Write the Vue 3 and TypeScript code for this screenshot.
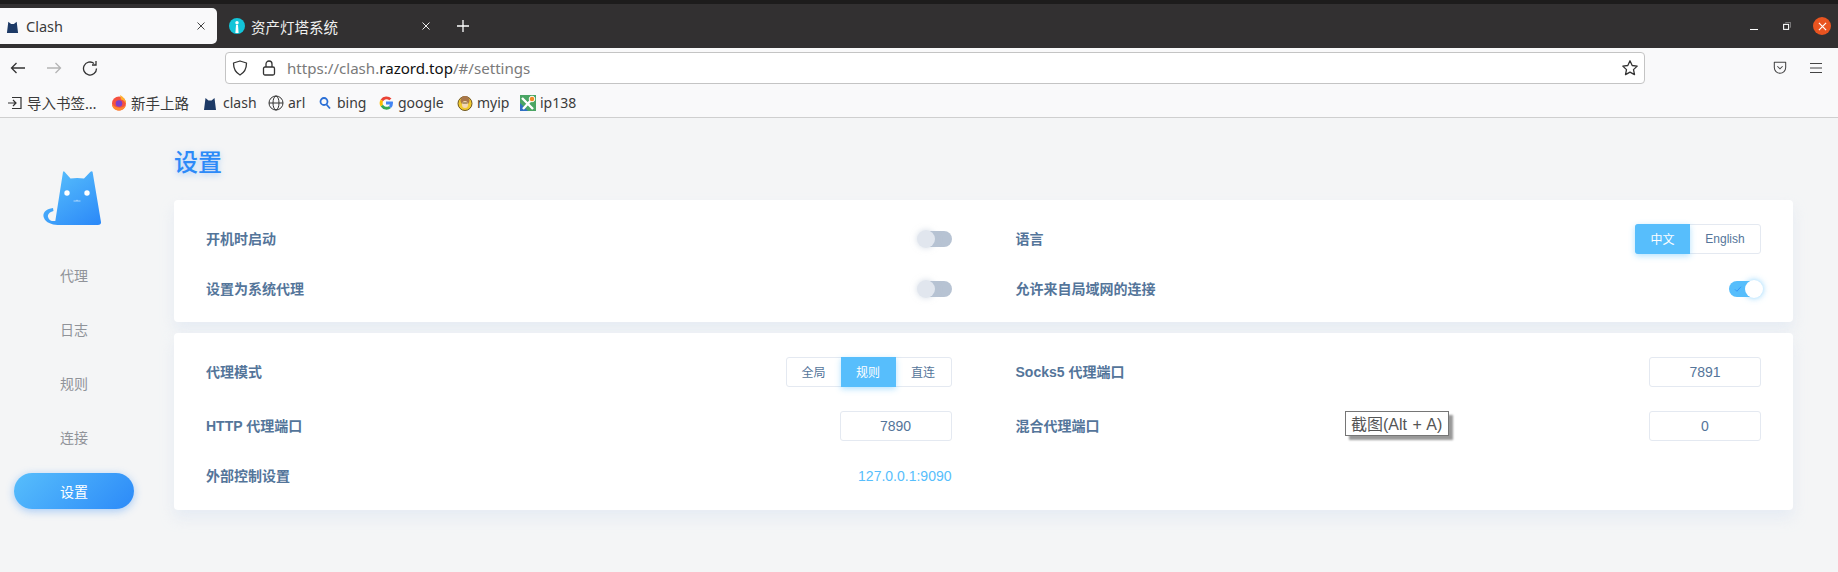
<template>
  <div class="page">
    <div class="top-strip"></div>
    <div class="tabbar">
      <div class="tab active">
        <svg class="fav small" viewBox="0 0 14 16"><path d="M1 15 2.500 3l3 2.400h3L11.500 3 13 15z" fill="#1d3a66" /></svg>
        <span class="tab-title">Clash</span>
        <svg class="tab-close" viewBox="0 0 8 8"><path d="M.5.5l7 7M7.500.5l-7 7" stroke="#444" stroke-width="1" /></svg>
      </div>
      <div class="tab">
        <svg class="fav" viewBox="0 0 16 16">
          <circle cx="8" cy="8" r="8" fill="#13c4d8" />
          <path d="M6.400 15 7 7h2l.6 8z" fill="#fff" />
          <circle cx="8" cy="4.800" r="1.700" fill="#fff" />
        </svg>
        <span class="tab-title">资产灯塔系统</span>
        <svg class="tab-close" viewBox="0 0 8 8"><path d="M.5.5l7 7M7.500.5l-7 7" stroke="#eee" stroke-width="1" /></svg>
      </div>
      <svg class="new-tab" viewBox="0 0 12 12"><path d="M6 0v12M0 6h12" stroke="#fff" stroke-width="1.300" /></svg>
      <div class="win-controls">
        <span class="win-min"></span>
        <svg class="win-max" viewBox="0 0 9 9">
          <path d="M3 1.500V.5h5.500V6H7.500" fill="none" stroke="#aaa" stroke-width=".7" />
          <rect x=".7" y="2.700" width="5.600" height="5.600" fill="none" stroke="#fff" stroke-width="1.200" />
        </svg>
        <span class="win-close">
          <svg viewBox="0 0 10 10"><path d="M1 1l8 8M9 1l-8 8" stroke="#fff" stroke-width="1.300" /></svg>
        </span>
      </div>
    </div>

    <div class="toolbar">
      <svg class="tool" viewBox="0 0 16 16"><path d="M15 8H1.500M6.500 3l-5 5 5 5" fill="none" stroke="#333" stroke-width="1.300" /></svg>
      <svg class="tool" viewBox="0 0 16 16"><path d="M1 8h13.500M9.500 3l5 5-5 5" fill="none" stroke="#b4b4b4" stroke-width="1.300" /></svg>
      <svg class="tool" viewBox="0 0 16 16"><path d="M14.500 8.500A6.500 6.500 0 1 1 12 3.400M14 1v4h-4" fill="none" stroke="#333" stroke-width="1.300" /></svg>
      <div class="urlbar">
        <svg class="url-icon" viewBox="0 0 16 16"><path d="M8 1 14.500 3c0 6-2 9.500-6.500 12C3.500 12.500 1.500 9 1.500 3z" fill="none" stroke="#333" stroke-width="1.300" stroke-linejoin="round" /></svg>
        <svg class="url-icon lock" viewBox="0 0 16 16">
          <rect x="2.500" y="7" width="11" height="8" rx="1.500" fill="none" stroke="#333" stroke-width="1.300" />
          <path d="M5 7V4a3 3 0 0 1 6 0v3" fill="none" stroke="#333" stroke-width="1.300" />
        </svg>
        <span class="url"><span class="dim">https://clash.</span>razord.top<span class="dim">/#/settings</span></span>
        <svg class="url-star" viewBox="0 0 16 16"><path d="M8 .8 10.200 5.500l5 .6-3.700 3.500 1 5L8 12.100l-4.500 2.500 1-5L.8 6.100l5-.6z" fill="none" stroke="#333" stroke-width="1.300" stroke-linejoin="round" /></svg>
      </div>
      <svg class="pocket" viewBox="0 0 16 16"><path d="M1.500 1.500h13v6a6.500 6.500 0 0 1-13 0z" fill="none" stroke="#444" stroke-width="1.200" stroke-linejoin="round" /><path d="M5 6l3 3 3-3" fill="none" stroke="#444" stroke-width="1.200" /></svg>
      <svg class="menu" viewBox="0 0 14 12"><path d="M1 1.500h12M1 6h12M1 10.500h12" stroke="#444" stroke-width="1.200" /></svg>
    </div>

    <div class="bookmarks">
      <div class="bm cjk">
        <svg class="bm-icon" viewBox="0 0 16 16"><path d="M1 8h8M6 5l3 3-3 3" fill="none" stroke="#333" stroke-width="1.200" /><path d="M5 2.500h9v11H5" fill="none" stroke="#333" stroke-width="1.200" /></svg>
        导入书签…
      </div>
      <div class="bm cjk">
        <svg class="bm-icon" viewBox="0 0 16 16">
          <circle cx="8" cy="8.500" r="7" fill="#f5513f" />
          <path d="M9 0c3 2 6.500 4.500 6 9-1-2.500-2.500-4-5-4.500z" fill="#ffb02e" />
          <path d="M1 9c0 4 3 6.500 7 6.500s6-2.500 7-5.500c-2 2-5 3-8 2.500S2 10.500 1 9z" fill="#ff8a2e" />
          <circle cx="8" cy="8.500" r="3.300" fill="#7d3fc9" />
        </svg>
        新手上路
      </div>
      <div class="bm">
        <svg class="bm-icon" viewBox="0 0 16 16"><path d="M1 15 2.500 3l3 2.400h3L11.500 3 13 15z" fill="#1d3a66" /></svg>
        clash
      </div>
      <div class="bm">
        <svg class="bm-icon" viewBox="0 0 16 16">
          <circle cx="8" cy="8" r="7" fill="none" stroke="#333" />
          <ellipse cx="8" cy="8" rx="3" ry="7" fill="none" stroke="#333" />
          <path d="M1 8h14" stroke="#333" />
        </svg>
        arl
      </div>
      <div class="bm">
        <svg class="bm-icon" viewBox="0 0 16 16"><circle cx="7" cy="6.500" r="3.500" fill="none" stroke="#2a6fd6" stroke-width="1.800" /><path d="M9.500 9.500l3.500 4" stroke="#2a6fd6" stroke-width="1.800" /></svg>
        bing
      </div>
      <div class="bm">
        <svg class="bm-icon" viewBox="0 0 16 16">
          <path d="M13.500 3.600A7 7 0 0 0 2.700 4.400L5 6.200a4.200 4.200 0 0 1 6.300-1z" fill="#ea4335" />
          <path d="M2.700 4.400a7 7 0 0 0 0 7.200L5 9.800a4.200 4.200 0 0 1 0-3.600z" fill="#fbbc05" />
          <path d="M2.700 11.600a7 7 0 0 0 10.300 1.400l-2.200-1.800A4.200 4.200 0 0 1 5 9.800z" fill="#34a853" />
          <path d="M15 8c0-.5 0-1-.2-1.500H8v2.900h3.900a3.500 3.500 0 0 1-1.100 1.800l2.200 1.800A7 7 0 0 0 15 8z" fill="#4285f4" />
        </svg>
        google
      </div>
      <div class="bm">
        <svg class="bm-icon" viewBox="0 0 16 16">
          <ellipse cx="8" cy="8.500" rx="7" ry="7" fill="#f0c92e" stroke="#6e5520" />
          <circle cx="8" cy="5.500" r="4.500" fill="#a9774a" />
          <ellipse cx="8" cy="9.500" rx="3" ry="3.500" fill="#f2d7b5" />
          <path d="M5.500 8h5" stroke="#6e5520" />
        </svg>
        myip
      </div>
      <div class="bm">
        <svg class="bm-icon" viewBox="0 0 16 16">
          <rect width="16" height="16" fill="#4aa564" />
          <path d="M0 8 8 16H0z" fill="#2f6fc4" />
          <path d="M2 3l11 11M3 14 13 3" stroke="#fff" stroke-width="2.400" />
          <circle cx="12" cy="4" r="2.800" fill="#f08a24" stroke="#fff" />
        </svg>
        ip138
      </div>
    </div>

    <main class="app">
      <aside class="sidebar">
        <svg class="logo" viewBox="0 0 58 54">
          <defs>
            <linearGradient id="cat" x1="0.2" y1="0" x2="0.9" y2="1">
              <stop offset="0" stop-color="#57befc" />
              <stop offset="1" stop-color="#2c8af8" />
            </linearGradient>
          </defs>
          <path
            d="M20 1C20.500 0 21 0 21.500.8L27.500 7.500Q34 6.500 41 7.500L47.500.8C48.300 0 49.500 0 49.600 1L58 51C58.300 53 57 54 55 54L24 54C14 54.500 4 54 1 47C-1 43 2 38 10 37L10.500 40C6 41 4.500 44 5 46C6 49.500 9 50.500 12.300 50Z"
            fill="url(#cat)"
          />
          <circle cx="24" cy="22" r="2.700" fill="#fff" />
          <circle cx="44" cy="22" r="2.700" fill="#fff" />
          <path d="M30.500 30h7M34 28.800v1.200" stroke="#fff" stroke-opacity=".55" stroke-width="1" />
        </svg>
        <nav class="nav">
          <a v-for="item in navItems" :key="item" class="nav-item" :class="{ active: item === '设置' }">{{ item }}</a>
        </nav>
      </aside>

      <section class="content">
        <h1 class="title">设置</h1>

        <div class="card card-top">
          <div class="row">
            <span class="label">开机时启动</span>
            <span class="toggle"><span class="knob"></span></span>
          </div>
          <div class="row">
            <span class="label">语言</span>
            <div class="btn-group">
              <span class="btn on lang-zh">中文</span>
              <span class="btn lang-en">English</span>
            </div>
          </div>
          <div class="row">
            <span class="label">设置为系统代理</span>
            <span class="toggle"><span class="knob"></span></span>
          </div>
          <div class="row">
            <span class="label">允许来自局域网的连接</span>
            <span class="toggle checked">
              <svg class="check" viewBox="0 0 10 8"><path d="M1 4.500 3.500 7 9 1" fill="none" stroke="#2c8af8" stroke-width="1" /></svg>
              <span class="knob"></span>
            </span>
          </div>
        </div>

        <div class="card card-bottom">
          <div class="row">
            <span class="label">代理模式</span>
            <div class="btn-group">
              <span class="btn first">全局</span>
              <span class="btn on">规则</span>
              <span class="btn">直连</span>
            </div>
          </div>
          <div class="row">
            <span class="label">Socks5 代理端口</span>
            <span class="port">7891</span>
          </div>
          <div class="row">
            <span class="label">HTTP 代理端口</span>
            <span class="port">7890</span>
          </div>
          <div class="row">
            <span class="label">混合代理端口</span>
            <span class="port">0</span>
          </div>
          <div class="row short">
            <span class="label">外部控制设置</span>
            <span class="link">127.0.0.1:9090</span>
          </div>
        </div>
      </section>
      <div class="shot-tip">截图(Alt + A)</div>
    </main>
  </div>
</template>

<script setup lang="ts">
const navItems: string[] = ["代理", "日志", "规则", "连接", "设置"];
</script>

<style>
html,
body {
  margin: 0;
  background: #f4f5f6;
}
</style>

<style scoped>
.page {
  width: 1838px;
  height: 572px;
  overflow: hidden;
  display: flex;
  flex-direction: column;
  font-family: "Noto Sans", "Noto Sans CJK SC", sans-serif;
}

.top-strip {
  height: 4px;
  background: #1d1c1c;
}

/* Tabs */
.tabbar {
  height: 44px;
  flex-shrink: 0;
  background: #323031;
  display: flex;
  align-items: center;
  color: #fff;
}

.tab {
  width: 218px;
  height: 36px;
  display: flex;
  align-items: center;
  gap: 6px;
  font-size: 14.500px;
  padding: 0 5px 0 12px;
  box-sizing: border-box;
  color: #f0f0f0;
}

.tab.active {
  width: 217px;
  gap: 7px;
  padding: 0 12px 0 6px;
  background: #f9f9fa;
  border-radius: 0 5px 5px 0;
  color: #3b3b3b;
}

.fav {
  width: 16px;
  height: 16px;
  flex-shrink: 0;
}

.fav.small {
  width: 13px;
  height: 15px;
}

.tab-title {
  flex: 1;
}

.tab-close {
  width: 8px;
  height: 8px;
}

.new-tab {
  width: 12px;
  height: 12px;
  margin-left: 22px;
}

.win-controls {
  margin-left: auto;
  display: flex;
  align-items: center;
  padding-right: 7px;
}

.win-min {
  width: 8px;
  height: 1px;
  background: #fff;
  margin-top: 6px;
  margin-right: 25px;
}

.win-max {
  width: 8px;
  height: 8px;
  margin-right: 22px;
}

.win-close {
  width: 18px;
  height: 18px;
  border-radius: 50%;
  background: #e95420;
  display: flex;
  align-items: center;
  justify-content: center;
}

.win-close svg {
  width: 9px;
  height: 9px;
}

/* Toolbar */
.toolbar {
  height: 40px;
  flex-shrink: 0;
  background: #f9f9fa;
  display: flex;
  align-items: center;
  padding-left: 10px;
  gap: 20px;
}

.tool {
  width: 16px;
  height: 16px;
}

.urlbar {
  width: 1420px;
  height: 32px;
  margin-left: 107px;
  box-sizing: border-box;
  background: #fff;
  border: 1px solid #c4c4c4;
  border-radius: 4px;
  display: flex;
  align-items: center;
  padding: 0 6px;
}

.url-icon {
  width: 16px;
  height: 16px;
  flex-shrink: 0;
}

.lock {
  margin-left: 13px;
}

.url {
  font-size: 15.100px;
  margin-left: 10px;
  color: #111;
  flex: 1;
}

.dim {
  color: #7a7a7a;
}

.url-star {
  width: 16px;
  height: 16px;
}

.pocket {
  width: 14px;
  height: 14px;
  margin-left: 108px;
}

.menu {
  width: 14px;
  height: 12px;
  margin-left: 2px;
}

/* Bookmarks */
.bookmarks {
  height: 30px;
  box-sizing: border-box;
  flex-shrink: 0;
  background: #f9f9fa;
  border-bottom: 1px solid #cfcfcf;
  display: grid;
  grid-template-columns: 104px 92px 65px 49px 61px 79px 63px auto;
  justify-content: start;
  align-items: center;
  padding-left: 7px;
  font-size: 14px;
  color: #3b3b3b;
}

.bm {
  display: flex;
  align-items: center;
  gap: 4px;
  white-space: nowrap;
}

.bm.cjk {
  font-size: 14.500px;
}

.bm-icon {
  width: 16px;
  height: 16px;
  flex-shrink: 0;
}

/* App */
.app {
  position: relative;
  flex: 1;
  display: flex;
  background: #f4f5f6;
  font-family: "Liberation Sans", "Noto Sans CJK SC", sans-serif;
}

.sidebar {
  width: 174px;
  flex-shrink: 0;
  box-sizing: border-box;
  padding: 53px 0 0 14px;
}

.logo {
  display: block;
  width: 58px;
  height: 54px;
  margin-left: 29px;
}

.nav {
  margin-top: 32px;
  display: flex;
  flex-direction: column;
  gap: 18px;
}

.nav-item {
  width: 120px;
  height: 36px;
  border-radius: 18px;
  display: flex;
  align-items: center;
  justify-content: center;
  font-size: 14px;
  color: #909399;
}

.nav-item.active {
  color: #fff;
  background: linear-gradient(135deg, #57befc, #2c8af8);
  box-shadow: 0 2px 8px rgba(44, 138, 248, 0.4);
}

.content {
  width: 1619px;
  flex-shrink: 0;
}

.title {
  margin: 31px 0 0;
  height: 51px;
  line-height: 28px;
  font-size: 24px;
  font-weight: 500;
  color: #2c8af8;
  text-shadow: 0 2px 6px rgba(44, 138, 248, 0.35);
}

.card {
  background: #fff;
  border-radius: 4px;
  box-shadow: 0 8px 14px rgba(211, 222, 240, 0.4);
  display: grid;
  grid-template-columns: 1fr 1fr;
  column-gap: 64px;
  padding: 24px 32px;
  box-sizing: border-box;
}

.card-top {
  padding-bottom: 18px;
  row-gap: 20px;
  margin-bottom: 11px;
}

.card-bottom {
  row-gap: 24px;
}

.row {
  height: 30px;
  display: flex;
  align-items: center;
  justify-content: space-between;
}

.row.short {
  height: 20px;
  margin-top: 1px;
}

.label {
  font-size: 14px;
  font-weight: 700;
  color: #54759a;
  padding-bottom: 2px;
}

.toggle {
  position: relative;
  width: 32px;
  height: 16px;
  border-radius: 8px;
  background: #b7c3d3;
}

.knob {
  position: absolute;
  left: -3px;
  top: -1px;
  width: 18px;
  height: 18px;
  border-radius: 50%;
  background: #e1e6ee;
  box-shadow: 0 0 6px rgba(183, 195, 211, 0.6);
}

.toggle.checked {
  background: #57befc;
}

.toggle.checked .knob {
  left: 16px;
  background: #fff;
  box-shadow: 0 0 6px rgba(87, 190, 252, 0.7);
}

.check {
  position: absolute;
  left: 5px;
  top: 5px;
  width: 8px;
  height: 6px;
}

.btn-group {
  display: flex;
  height: 30px;
  box-sizing: border-box;
  border: 1px solid #e4e9f1;
  border-radius: 3px;
}

.btn {
  width: 55px;
  margin: -1px 0;
  padding-bottom: 1px;
  box-sizing: border-box;
  display: flex;
  align-items: center;
  justify-content: center;
  font-size: 12px;
  color: #54759a;
}

.btn.first {
  width: 54px;
}

.btn.on {
  background: #57befc;
  color: #fff;
  box-shadow: 0 2px 6px rgba(87, 190, 252, 0.45);
}

.lang-zh {
  margin-left: -1px;
  border-radius: 3px 0 0 3px;
}

.lang-en {
  width: 70px;
}

.port {
  width: 112px;
  height: 30px;
  box-sizing: border-box;
  border: 1px solid #e4e9f1;
  border-radius: 3px;
  display: flex;
  align-items: center;
  justify-content: center;
  font-size: 14px;
  color: #54759a;
}

.link {
  font-size: 14px;
  color: #57befc;
}

.shot-tip {
  position: absolute;
  left: 1345px;
  top: 293px;
  width: 104px;
  height: 25px;
  padding: 0 0 2px 5px;
  display: flex;
  align-items: center;
  background: #fff;
  border: 1px solid #767676;
  font-size: 16px;
  word-spacing: 1px;
  white-space: nowrap;
  color: #555;
  box-shadow: 4px 4px 2px rgba(0, 0, 0, 0.4);
  box-sizing: border-box;
}
</style>
